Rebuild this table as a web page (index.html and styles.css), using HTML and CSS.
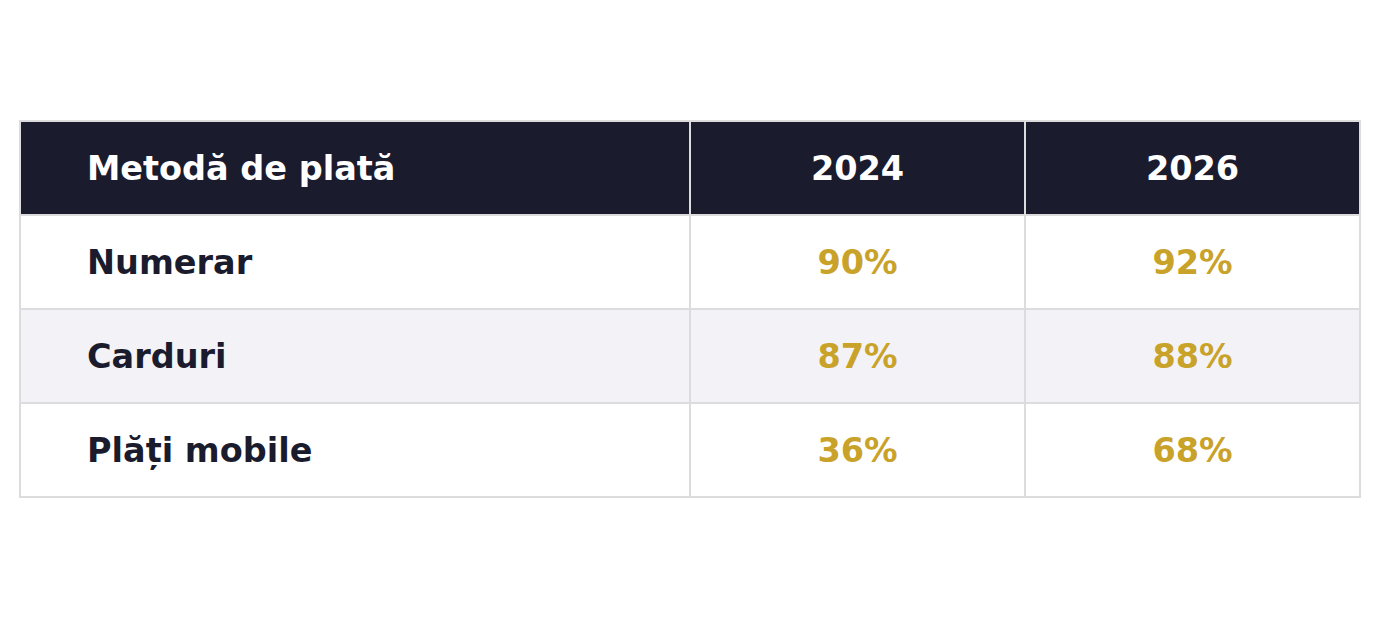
FILE: index.html
```html
<!DOCTYPE html>
<html lang="ro">
<head>
<meta charset="utf-8">
<link rel="stylesheet" href="styles.css">
</head>
<body>
<main class="wrap">
<table class="tbl">
  <colgroup><col class="c-name"><col class="c-year"><col class="c-year"></colgroup>
  <thead>
    <tr><th class="name">Metodă de plată</th><th>2024</th><th>2026</th></tr>
  </thead>
  <tbody>
    <tr><td class="name">Numerar</td><td>90%</td><td>92%</td></tr>
    <tr class="alt"><td class="name">Carduri</td><td>87%</td><td>88%</td></tr>
    <tr><td class="name">Plăți mobile</td><td>36%</td><td>68%</td></tr>
  </tbody>
</table>
</main>
</body>
</html>
```
FILE: styles.css
```css
html, body { margin: 0; padding: 0; background: #ffffff; }
body { font-family: "DejaVu Sans", sans-serif; }
.wrap { padding: 120px 19px 0 19px; }
.tbl {
  width: 100%;
  border-collapse: collapse;
  table-layout: fixed;
  font-weight: bold;
  font-size: 33.5px;
}
.c-name { width: 50%; }
.c-year { width: 25%; }
.tbl th, .tbl td {
  border: 2px solid #dcdcdc;
  height: 92px;
  padding: 0;
  text-align: center;
}
.tbl th { background: #1b1b2e; color: #ffffff; }
.tbl .name { text-align: left; padding-left: 66px; }
.tbl td { color: #c9a22a; }
.tbl td.name { color: #1b1b2e; }
.tbl tr.alt td { background: #f3f3f7; }
```
